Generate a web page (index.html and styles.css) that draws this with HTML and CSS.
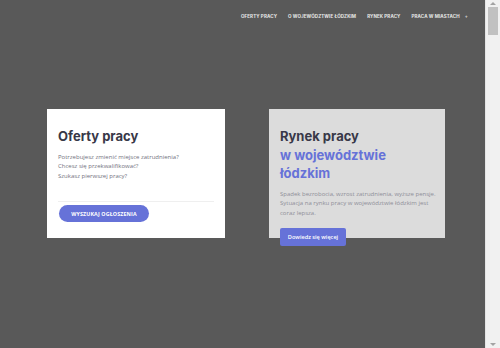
FILE: index.html
```html
<!DOCTYPE html>
<html lang="pl">
<head>
<meta charset="utf-8">
<title>Praca w województwie łódzkim</title>
<link rel="stylesheet" href="styles.css">
</head>
<body>
<div class="viewport">
  <div class="page">
    <header class="topbar">
      <nav class="menu">
        <a class="menu-item" href="#">OFERTY PRACY</a>
        <a class="menu-item" href="#">O WOJEWÓDZTWIE ŁÓDZKIM</a>
        <a class="menu-item" href="#">RYNEK PRACY</a>
        <a class="menu-item" href="#">PRACA W MIASTACH <span class="plus">+</span></a>
      </nav>
    </header>
    <main class="cards">
      <section class="card card-white">
        <h2 class="card-title">Oferty pracy</h2>
        <p class="card-text">Potrzebujesz zmienić miejsce zatrudnienia?<br>Chcesz się przekwalifikować?<br>Szukasz pierwszej pracy?</p>
        <hr class="divider">
        <a class="btn-pill" href="#">WYSZUKAJ OGŁOSZENIA</a>
      </section>
      <section class="card card-grey">
        <h2 class="card-title">Rynek pracy<br><span class="accent">w województwie<br>łódzkim</span></h2>
        <p class="card-text">Spadek bezrobocia, wzrost zatrudnienia, wyższe pensje. Sytuacja na rynku pracy w województwie łódzkim jest coraz lepsza.</p>
        <a class="btn-rect" href="#">Dowiedz się więcej</a>
      </section>
    </main>
  </div>
  <div class="scrollbar">
    <div class="sb-arrow sb-up"></div>
    <div class="sb-track"><div class="sb-thumb"></div></div>
    <div class="sb-arrow sb-down"></div>
  </div>
</div>
</body>
</html>
```

FILE: styles.css
```css
html, body {
  margin: 0;
  padding: 0;
  overflow: hidden;
}
body {
  background: #595959;
  font-family: "Open Sans", "DejaVu Sans", sans-serif;
}
.viewport {
  display: flex;
  height: 348px;
}
.page {
  flex: 1;
  display: flex;
  flex-direction: column;
}
.topbar {
  display: flex;
  justify-content: flex-end;
  padding: 13px 17px 0 0;
  height: 21px;
}
.menu {
  display: flex;
  gap: 11px;
}
.menu-item {
  color: #e8e8e8;
  text-decoration: none;
  font-family: "Inter", sans-serif;
  font-weight: 700;
  font-size: 4.5px;
  line-height: 7px;
  letter-spacing: 0.1px;
}
.plus {
  margin-left: 4px;
  color: #cfcfcf;
}
.cards {
  display: flex;
  gap: 44px;
  padding: 75px 0 0 47px;
}
.card {
  box-sizing: border-box;
  width: 178px;
  height: 129px;
  padding: 18px 11px 0 11px;
  display: flex;
  flex-direction: column;
  align-items: flex-start;
}
.card-white {
  background: #ffffff;
}
.card-grey {
  background: #dcdcdc;
  width: 176px;
  padding-right: 2px;
}
.card-title {
  margin: 0;
  font-family: "Inter", sans-serif;
  font-weight: 700;
  font-size: 13px;
  line-height: 18.5px;
  color: #383848;
}
.accent {
  color: #6672d8;
}
.card-text {
  margin: 7px 0 0 0;
  font-size: 6px;
  line-height: 9.6px;
  color: #72727e;
}
.card-grey .card-text {
  color: #8e8e98;
  margin-top: 7px;
}
.divider {
  align-self: stretch;
  margin: 20px 0 0 0;
  border: 0;
  border-top: 1px solid #efefef;
  height: 0;
}
.btn-pill {
  margin-top: 3px;
  margin-left: 1px;
  width: 90px;
  height: 17px;
  border-radius: 9px;
  background: #6672d8;
  color: #fff;
  text-decoration: none;
  font-size: 5.3px;
  font-weight: 700;
  display: flex;
  align-items: center;
  justify-content: center;
  letter-spacing: 0.15px;
}
.btn-rect {
  margin-top: 10px;
  width: 66px;
  height: 18px;
  border-radius: 2px;
  background: #6672d8;
  color: #fff;
  text-decoration: none;
  font-size: 5.6px;
  font-weight: 600;
  display: flex;
  align-items: center;
  justify-content: center;
  flex-shrink: 0;
}
.scrollbar {
  width: 15px;
  flex-shrink: 0;
  background: #f1f1f1;
  border-left: 1px solid #e4e4e4;
  box-sizing: border-box;
  display: flex;
  flex-direction: column;
}
.sb-arrow {
  height: 7px;
  display: flex;
  justify-content: center;
  align-items: center;
}
.sb-up::before,
.sb-down::before {
  content: "";
  border-left: 3px solid transparent;
  border-right: 3px solid transparent;
}
.sb-up::before {
  border-bottom: 3px solid #a3a3a3;
}
.sb-down::before {
  border-top: 3px solid #a3a3a3;
}
.sb-track {
  flex: 1;
  padding: 0 2px;
}
.sb-thumb {
  height: 28px;
  background: #c1c1c1;
}
```
